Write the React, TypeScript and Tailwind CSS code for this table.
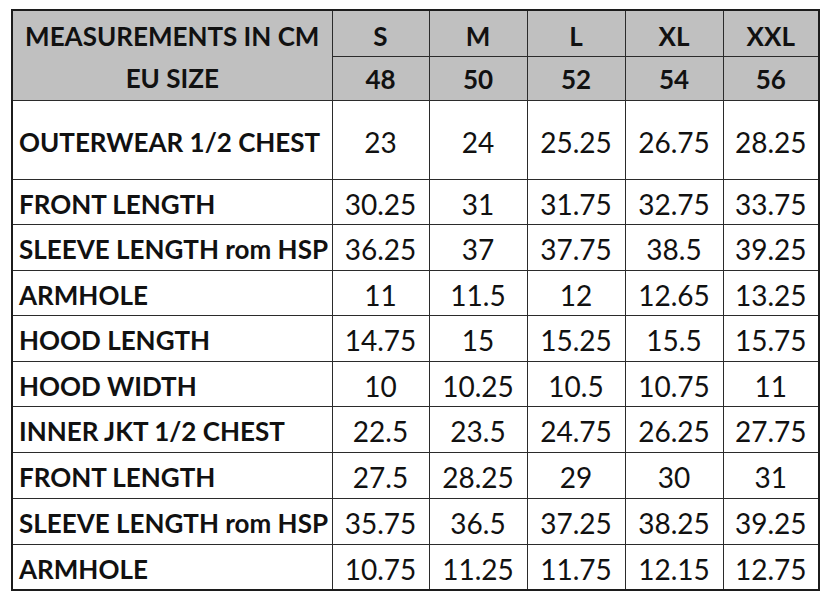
import React from 'react'

type Row = { label: string; values: string[]; h: number }

const sizes = ['S', 'M', 'L', 'XL', 'XXL']
const euSizes = ['48', '50', '52', '54', '56']

const rows: Row[] = [
  { label: 'OUTERWEAR 1/2 CHEST', values: ['23', '24', '25.25', '26.75', '28.25'], h: 79 },
  { label: 'FRONT LENGTH', values: ['30.25', '31', '31.75', '32.75', '33.75'], h: 45 },
  { label: 'SLEEVE LENGTH rom HSP', values: ['36.25', '37', '37.75', '38.5', '39.25'], h: 46 },
  { label: 'ARMHOLE', values: ['11', '11.5', '12', '12.65', '13.25'], h: 45 },
  { label: 'HOOD LENGTH', values: ['14.75', '15', '15.25', '15.5', '15.75'], h: 46 },
  { label: 'HOOD WIDTH', values: ['10', '10.25', '10.5', '10.75', '11'], h: 45 },
  { label: 'INNER JKT 1/2 CHEST', values: ['22.5', '23.5', '24.75', '26.25', '27.75'], h: 46 },
  { label: 'FRONT LENGTH', values: ['27.5', '28.25', '29', '30', '31'], h: 46 },
  { label: 'SLEEVE LENGTH rom HSP', values: ['35.75', '36.5', '37.25', '38.25', '39.25'], h: 46 },
  { label: 'ARMHOLE', values: ['10.75', '11.25', '11.75', '12.15', '12.75'], h: 46 },
]

const App = () => {
  return (
    <div className="h-[608px] w-[837px] bg-white pl-[11px] pt-[9px] font-['Lato',sans-serif] text-[#111]">
      <table className="w-[807px] table-fixed border-collapse border-2 border-[#1c1c1c]">
        <colgroup>
          <col className="w-[320px]" />
          <col className="w-[97px]" />
          <col className="w-[98px]" />
          <col className="w-[98px]" />
          <col className="w-[98px]" />
          <col className="w-[96px]" />
        </colgroup>
        <thead className="bg-[#c0c0c0]">
          <tr className="h-[46px]">
            <th
              rowSpan={2}
              className="border border-[#2b2b2b] p-0 pt-[4px] text-center align-middle text-[26px] font-bold leading-[42px]"
            >
              MEASUREMENTS IN CM
              <br />
              EU SIZE
            </th>
            {sizes.map((s) => (
              <th key={s} className="border border-[#2b2b2b] p-0 pt-[6px] text-center text-[26px] leading-[32px] font-bold">
                {s}
              </th>
            ))}
          </tr>
          <tr className="h-[44px]">
            {euSizes.map((s) => (
              <th key={s} className="border border-[#2b2b2b] p-0 pt-[2px] text-center text-[26px] leading-[32px] font-bold">
                {s}
              </th>
            ))}
          </tr>
        </thead>
        <tbody>
          {rows.map((row, i) => (
            <tr key={i} style={{ height: row.h }}>
              <td className="border border-[#2b2b2b] p-0 pl-[6px] pt-[4px] text-[26px] leading-[32px] font-bold whitespace-nowrap">
                {row.label}
              </td>
              {row.values.map((v, j) => (
                <td key={j} className="border border-[#2b2b2b] p-0 pt-[4px] text-center text-[28px] leading-[32px]">
                  {v}
                </td>
              ))}
            </tr>
          ))}
        </tbody>
      </table>
    </div>
  )
}

export default App
